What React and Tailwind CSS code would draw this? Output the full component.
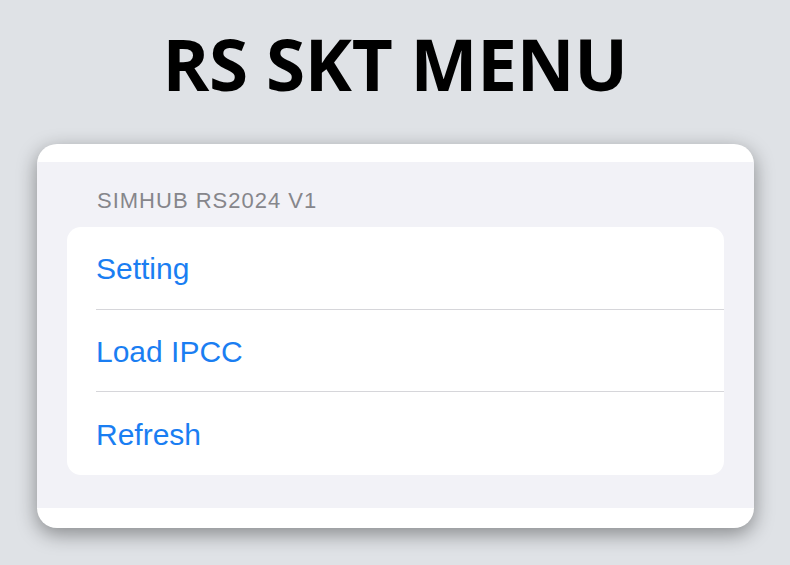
import React from "react";

export default function App() {
  const items = ["Setting", "Load IPCC", "Refresh"];
  return (
    <div className="w-[790px] h-[565px] bg-[#dfe2e6] flex flex-col items-center overflow-hidden">
      <h1 className="mt-[8px] h-[116px] flex items-center font-bold text-[71px] leading-none text-black tracking-[-0.3px] pb-[6px]" style={{ fontFamily: '"Open Sans", sans-serif' }}>
        RS SKT MENU
      </h1>
      <div className="mt-[20px] w-[717px] h-[384px] bg-white rounded-[20px] shadow-[0_6px_20px_rgba(0,0,0,0.4)] pt-[18px] pb-[20px] flex flex-col ml-[1px]">
        <div className="flex-1 bg-[#f2f2f7] px-[30px] pt-[28px]" style={{ fontFamily: '"Liberation Sans", Arial, sans-serif' }}>
          <div className="pl-[30px] text-[22px] tracking-[1px] text-[#86868b] leading-none h-[37px]">SIMHUB RS2024 V1</div>
          <div className="bg-white rounded-[14px] flex flex-col">
            {items.map((t, i) => (
              <div key={t} className="pl-[29px] h-[82.5px] flex flex-col">
                <div className="flex-1 flex items-center pt-[2px] text-[30px] text-[#1a7ef2]">{t}</div>
                {i < items.length - 1 && <div className="h-px bg-[#d6d6da]" />}
              </div>
            ))}
          </div>
        </div>
      </div>
    </div>
  );
}
